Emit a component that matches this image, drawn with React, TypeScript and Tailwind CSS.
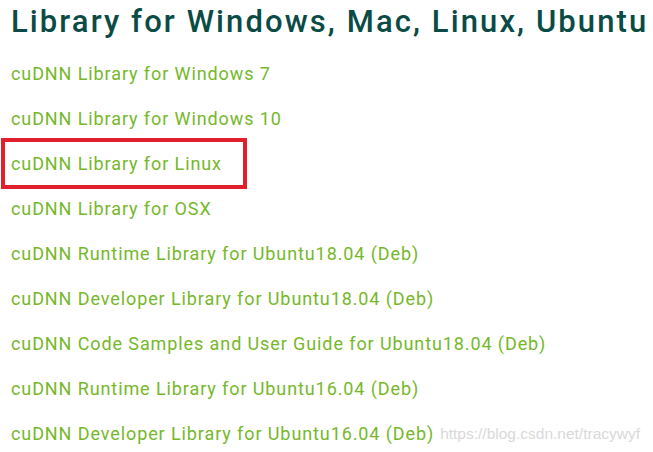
const links = [
  'cuDNN Library for Windows 7',
  'cuDNN Library for Windows 10',
  'cuDNN Library for Linux',
  'cuDNN Library for OSX',
  'cuDNN Runtime Library for Ubuntu18.04 (Deb)',
  'cuDNN Developer Library for Ubuntu18.04 (Deb)',
  'cuDNN Code Samples and User Guide for Ubuntu18.04 (Deb)',
  'cuDNN Runtime Library for Ubuntu16.04 (Deb)',
  'cuDNN Developer Library for Ubuntu16.04 (Deb)',
]

export default function App() {
  return (
    <div className="h-[452px] w-[653px] overflow-hidden bg-white font-['Roboto',sans-serif]">
      <h2 className="whitespace-nowrap pl-[11px] pt-[2px] text-[31px] font-medium leading-[40px] tracking-[2.1px] text-[#0b4b46]">
        Library for Windows, Mac, Linux, Ubuntu
      </h2>
      <ul className="mt-[9px]">
        {links.map((label, i) => (
          <li key={label} className="flex h-[45px] items-center">
            <span
              className={
                i === 2
                  ? 'ml-[1px] flex h-[51px] w-[246px] items-center border-4 border-[#e0202a] pl-[6px]'
                  : 'pl-[11px]'
              }
            >
              <a className="whitespace-nowrap text-[18px] tracking-[0.9px] text-[#76b82a]">{label}</a>
            </span>
            {i === links.length - 1 && (
              <span className="ml-[6px] whitespace-nowrap font-['Liberation_Sans',sans-serif] text-[15.5px] text-[#d9d9d9]">
                https://blog.csdn.net/tracywyf
              </span>
            )}
          </li>
        ))}
      </ul>
    </div>
  )
}
